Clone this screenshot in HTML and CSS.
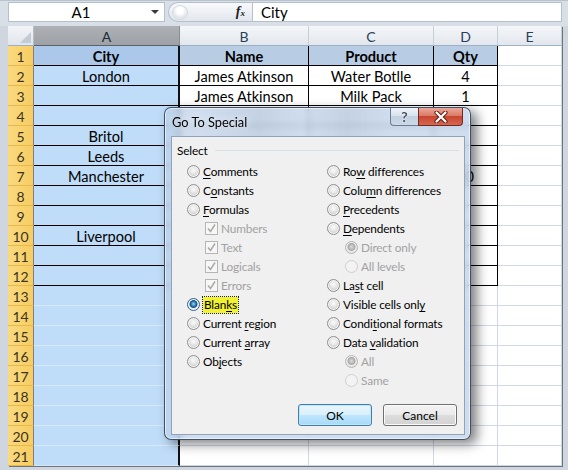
FILE: index.html
```html
<!DOCTYPE html>
<html>
<head>
<meta charset="utf-8">
<title>Go To Special</title>
<link rel="stylesheet" href="styles.css">
</head>
<body>
<div class="window">
  <div class="fbar">
    <div class="namebox"><span class="nb-text">A1</span><span class="nb-arrow"></span></div>
    <div class="fxpill"><span class="knob"></span><span class="fx">f<span class="fxs">x</span></span></div>
    <div class="finput">City</div>
  </div>
  <div class="sheet">
    <div class="corner"><span class="tri"></span></div><div class="ch sel">A</div><div class="ch">B</div><div class="ch">C</div><div class="ch">D</div><div class="ch">E</div>

    <div class="rh">1</div><div class="a t h">City</div><div class="t h">Name</div><div class="t h">Product</div><div class="t h">Qty</div><div></div>
    <div class="rh">2</div><div class="a t">London</div><div class="t">James Atkinson</div><div class="t">Water Botlle</div><div class="t">4</div><div></div>
    <div class="rh">3</div><div class="a t"></div><div class="t">James Atkinson</div><div class="t">Milk Pack</div><div class="t">1</div><div></div>
    <div class="rh">4</div><div class="a t"></div><div class="t"></div><div class="t"></div><div class="t"></div><div></div>
    <div class="rh">5</div><div class="a t">Britol</div><div class="t"></div><div class="t"></div><div class="t"></div><div></div>
    <div class="rh">6</div><div class="a t">Leeds</div><div class="t"></div><div class="t"></div><div class="t"></div><div></div>
    <div class="rh">7</div><div class="a t">Manchester</div><div class="t"></div><div class="t"></div><div class="t">10</div><div></div>
    <div class="rh">8</div><div class="a t"></div><div class="t"></div><div class="t"></div><div class="t"></div><div></div>
    <div class="rh">9</div><div class="a t"></div><div class="t"></div><div class="t"></div><div class="t"></div><div></div>
    <div class="rh">10</div><div class="a t">Liverpool</div><div class="t"></div><div class="t"></div><div class="t"></div><div></div>
    <div class="rh">11</div><div class="a t"></div><div class="t"></div><div class="t"></div><div class="t"></div><div></div>
    <div class="rh">12</div><div class="a t"></div><div class="t"></div><div class="t"></div><div class="t"></div><div></div>
    <div class="rh">13</div><div class="a x"></div><div></div><div></div><div></div><div></div>
    <div class="rh">14</div><div class="a x"></div><div></div><div></div><div></div><div></div>
    <div class="rh">15</div><div class="a x"></div><div></div><div></div><div></div><div></div>
    <div class="rh">16</div><div class="a x"></div><div></div><div></div><div></div><div></div>
    <div class="rh">17</div><div class="a x"></div><div></div><div></div><div></div><div></div>
    <div class="rh">18</div><div class="a x"></div><div></div><div></div><div></div><div></div>
    <div class="rh">19</div><div class="a x"></div><div></div><div></div><div></div><div></div>
    <div class="rh">20</div><div class="a x"></div><div></div><div></div><div></div><div></div>
    <div class="rh">21</div><div class="a x"></div><div></div><div></div><div></div><div></div>
  </div>
</div>

<div class="dialog">
  <div class="titlebar">
    <div class="title">Go To Special</div>
    <div class="tb-help">?</div>
    <div class="tb-close"><svg width="16" height="12" viewBox="0 0 16 12"><path d="M3.5 1.5 L12.5 10.5 M12.5 1.5 L3.5 10.5" stroke="#5b2219" stroke-width="4.2" stroke-linecap="round" fill="none"/><path d="M3.5 1.5 L12.5 10.5 M12.5 1.5 L3.5 10.5" stroke="#ffffff" stroke-width="2.2" stroke-linecap="round" fill="none"/></svg></div>
  </div>
  <div class="client">
    <div class="grp"><span>Select</span><span class="grp-line"></span></div>
    <div class="cols">
      <div class="col">
        <div class="item"><span class="rb"></span><span><u>C</u>omments</span></div>
        <div class="item"><span class="rb"></span><span>C<u>o</u>nstants</span></div>
        <div class="item"><span class="rb"></span><span><u>F</u>ormulas</span></div>
        <div class="item ind dis"><span class="cb"><svg width="11" height="11" viewBox="0 0 11 11"><path d="M2 5.5 L4.5 8.5 L9 1.5" stroke="#a9a9a9" stroke-width="1.5" fill="none"/></svg></span><span>Numbers</span></div>
        <div class="item ind dis"><span class="cb"><svg width="11" height="11" viewBox="0 0 11 11"><path d="M2 5.5 L4.5 8.5 L9 1.5" stroke="#a9a9a9" stroke-width="1.5" fill="none"/></svg></span><span>Text</span></div>
        <div class="item ind dis"><span class="cb"><svg width="11" height="11" viewBox="0 0 11 11"><path d="M2 5.5 L4.5 8.5 L9 1.5" stroke="#a9a9a9" stroke-width="1.5" fill="none"/></svg></span><span>Logicals</span></div>
        <div class="item ind dis"><span class="cb"><svg width="11" height="11" viewBox="0 0 11 11"><path d="M2 5.5 L4.5 8.5 L9 1.5" stroke="#a9a9a9" stroke-width="1.5" fill="none"/></svg></span><span>Errors</span></div>
        <div class="item"><span class="rb on"></span><span class="hl">Blan<u>k</u>s</span></div>
        <div class="item"><span class="rb"></span><span>Current <u>r</u>egion</span></div>
        <div class="item"><span class="rb"></span><span>Current <u>a</u>rray</span></div>
        <div class="item"><span class="rb"></span><span>Ob<u>j</u>ects</span></div>
      </div>
      <div class="col col2">
        <div class="item"><span class="rb"></span><span>Ro<u>w</u> differences</span></div>
        <div class="item"><span class="rb"></span><span>Colu<u>m</u>n differences</span></div>
        <div class="item"><span class="rb"></span><span><u>P</u>recedents</span></div>
        <div class="item"><span class="rb"></span><span><u>D</u>ependents</span></div>
        <div class="item ind dis"><span class="rb don"></span><span>Direct only</span></div>
        <div class="item ind dis"><span class="rb doff"></span><span>All levels</span></div>
        <div class="item"><span class="rb"></span><span>La<u>s</u>t cell</span></div>
        <div class="item"><span class="rb"></span><span>Visible cells onl<u>y</u></span></div>
        <div class="item"><span class="rb"></span><span>Condi<u>t</u>ional formats</span></div>
        <div class="item"><span class="rb"></span><span>Data <u>v</u>alidation</span></div>
        <div class="item ind dis"><span class="rb don"></span><span>All</span></div>
        <div class="item ind dis"><span class="rb doff"></span><span>Same</span></div>
      </div>
    </div>
    <div class="btns">
      <div class="btn def">OK</div>
      <div class="btn">Cancel</div>
    </div>
  </div>
</div>
</body>
</html>
```

FILE: styles.css
```css
* { box-sizing: border-box; }
html, body { margin: 0; padding: 0; }
body {
  width: 568px;
  height: 470px;
  overflow: hidden;
  position: relative;
  background: #cfd6df;
  font-family: Lato, "Liberation Sans", sans-serif;
  color: #000;
}

.window { padding: 0 6px 0 8px; }

/* formula bar */
.fbar {
  display: flex;
  height: 26px;
  padding: 1px 6px 4px 8px;
  margin: 0 -6px 0 -8px;
  background: #d9dfe7;
  border-top: 1px solid #b9c2cd;
}
.namebox {
  width: 157px;
  background: #fff;
  border: 1px solid #b5c0cd;
  display: flex;
  align-items: center;
  font-size: 15px;
}
.nb-text { flex: 1; text-align: center; padding-left: 2px; }
.nb-arrow {
  width: 0; height: 0;
  border-left: 4px solid transparent;
  border-right: 4px solid transparent;
  border-top: 4px solid #3a3a3a;
  margin-right: 5px;
}
.fxpill {
  width: 84px;
  margin-left: 3px;
  border: 1px solid #b5c0cd;
  border-right: none;
  border-radius: 11px 0 0 11px;
  background: linear-gradient(#f8f9fb, #e2e7ed);
  display: flex;
  align-items: center;
  justify-content: flex-end;
  padding-right: 7px;
  position: relative;
}
.knob {
  position: absolute;
  left: 4px; top: 3px;
  width: 14px; height: 13px;
  border-radius: 50%;
  background: radial-gradient(circle at 50% 35%, #ffffff 0 3px, #e3e7ec 7px);
  box-shadow: 0 0 0 1px #d3d9e0;
}
.fx {
  font-family: "Liberation Serif", serif;
  font-style: italic;
  font-weight: bold;
  font-size: 14px;
  color: #222;
}
.fxs { font-size: 9px; }
.finput {
  flex: 1;
  background: #fff;
  border: 1px solid #b5c0cd;
  font-size: 15px;
  padding-left: 8px;
  display: flex;
  align-items: center;
}

/* sheet */
.sheet {
  display: grid;
  grid-template-columns: 26px 146px 129px 125px 64px 64px;
  grid-auto-rows: 20px;
  background: #fff;
  font-size: 14.6px;
  box-shadow: 1px 1px 0 #6f747a;
}
.sheet > div {
  border-right: 1px solid #d0d7e5;
  border-bottom: 1px solid #d0d7e5;
  display: flex;
  align-items: center;
  justify-content: center;
  white-space: nowrap;
  overflow: hidden;
  padding-top: 1px;
}
.sheet > .corner {
  background: linear-gradient(#f2f4f7, #e1e6ec);
  border-right: 1px solid #b4bfcc;
  border-bottom: 1px solid #9eb0c4;
  position: relative;
}
.tri {
  position: absolute;
  right: 2px; bottom: 2px;
  width: 0; height: 0;
  border-left: 11px solid transparent;
  border-bottom: 11px solid #c3cbd4;
}
.sheet > .ch {
  background: linear-gradient(#f5f7f9, #e2e7ed);
  border-right: 1px solid #c6ced8;
  border-bottom: 1px solid #9eb0c4;
  color: #2a3f5c;
  font-size: 14px;
}
.sheet > .ch.sel {
  background: linear-gradient(#adb0b4, #9ea1a5);
  border-right: 1px solid #8a8d91;
  border-bottom: 1px solid #5d6166;
  color: #1d2a3a;
}
.sheet > .rh {
  background: linear-gradient(90deg, #fad97f, #f7cd62);
  border-right: 1px solid #7f7f7f;
  border-bottom: 1px solid #e6b84e;
  color: #3b3423;
  font-size: 14px;
}
.sheet > .t {
  border-right-color: #000;
  border-bottom-color: #000;
}
.sheet > .a {
  background: #bfdcf8;
  border-right: 2px solid #111;
}
.sheet > .a.x { border-bottom-color: #d6e9fb; }
.sheet > .h { background: #b8cce4; font-weight: bold; }
.sheet > .a.h { background: #abc8ea; }

/* dialog */
.dialog {
  position: absolute;
  left: 164px;
  top: 107px;
  width: 307px;
  height: 333px;
  border: 1px solid rgba(38, 56, 80, 0.85);
  border-radius: 7px;
  background: rgba(190, 209, 233, 0.74);
  backdrop-filter: blur(3px);
  box-shadow: 6px 4px 12px rgba(0, 0, 0, 0.5), inset 0 0 0 1px rgba(255, 255, 255, 0.55);
  padding: 0 5px 4px 6px;
  display: flex;
  flex-direction: column;
  font-family: Lato, "Liberation Sans", sans-serif;
  font-size: 11.8px;
  letter-spacing: -0.15px;
}
.titlebar {
  height: 28px;
  display: flex;
  align-items: flex-start;
  flex: none;
  background: linear-gradient(90deg, rgba(255,255,255,0) 10%, rgba(120,130,150,0.12) 30%, rgba(255,255,255,0) 45%, rgba(120,130,150,0.12) 60%, rgba(255,255,255,0) 75%);
}
.title {
  flex: 1;
  padding-left: 1px;
  line-height: 28px;
  font-size: 12.8px;
  letter-spacing: 0;
  color: #000;
  text-shadow: 0 0 6px rgba(255, 255, 255, 0.9);
}
.tb-help {
  width: 28px;
  height: 18px;
  border: 1px solid #6b7d93;
  border-top: none;
  border-right: none;
  border-radius: 0 0 0 4px;
  background: linear-gradient(#eef3f9 0%, #d9e3ee 45%, #c2d0e0 50%, #cbd9e8 100%);
  text-align: center;
  font-weight: bold;
  font-size: 14px;
  line-height: 17px;
  color: #46505e;
  text-shadow: 0 0 2px #fff, 0 0 1px #fff;
}
.tb-close {
  width: 45px;
  height: 18px;
  margin-right: 2px;
  border: 1px solid #6e2a22;
  border-top: none;
  border-radius: 0 0 4px 0;
  background: linear-gradient(#eaa899 0%, #dc7a66 45%, #c8452f 50%, #d6674f 100%);
  display: flex;
  align-items: center;
  justify-content: center;
}
.client {
  flex: 1;
  background: #f0f0f0;
  border: 1px solid #90a3ba;
  padding: 6px 7px 0 5px;
  display: flex;
  flex-direction: column;
}
.grp {
  display: flex;
  align-items: center;
  height: 14px;
}
.grp-line {
  flex: 1;
  height: 1px;
  background: #d5dfe5;
  margin-left: 7px;
  margin-right: -2px;
}
.cols {
  display: flex;
  margin-top: 5px;
  padding-left: 10px;
}
.col {
  display: flex;
  flex-direction: column;
  width: 140px;
  flex: none;
}
.col2 { flex: 1; width: auto; }
.item {
  height: 19px;
  display: flex;
  align-items: center;
  white-space: nowrap;
}
.item.ind { padding-left: 18px; }
.item.dis { color: #a2a2a2; }
.item u { text-decoration-thickness: 1px; text-underline-offset: 2px; }

.rb {
  flex: none;
  width: 13px;
  height: 13px;
  border-radius: 50%;
  margin-right: 3px;
  border: 1px solid #8e8f8f;
  background: radial-gradient(circle at 50% 40%, #fbfbfb 0, #e9e9e9 3px, #cdcdcd 6px);
  box-shadow: inset 0 0 0 1px #f7f7f7;
}
.rb.on {
  border-color: #2c628b;
  background: radial-gradient(circle at 50% 45%, #9ad6f7 0, #3a8bc4 2px, #134a78 3.5px, #e8eef3 4.5px, #cdd5dd 6px);
}
.rb.don {
  border-color: #b5b5b5;
  background: radial-gradient(circle at 50% 45%, #dedede 0, #a8a8a8 3.5px, #eeeeee 4.5px, #e2e2e2 6px);
  box-shadow: none;
}
.rb.doff {
  border-color: #cfcfcf;
  background: #f3f3f3;
  box-shadow: none;
}
.cb {
  flex: none;
  width: 13px;
  height: 13px;
  margin-right: 3px;
  border: 1px solid #b5b5b5;
  background: #f7f7f7;
  display: flex;
  align-items: center;
  justify-content: center;
}
.cb svg { display: block; }
.hl {
  background: #f3f230;
  outline: 1px dotted #222;
  outline-offset: 0;
  padding: 0 1px;
  line-height: 16px;
}

.btns {
  display: flex;
  justify-content: flex-end;
  gap: 11px;
  margin-top: 14px;
}
.btn {
  width: 74px;
  height: 22px;
  border: 1px solid #707070;
  border-radius: 3px;
  background: linear-gradient(#f3f3f3 0%, #ebebeb 48%, #dddddd 52%, #d2d2d2 100%);
  box-shadow: inset 0 0 0 1px #fbfbfb;
  display: flex;
  align-items: center;
  justify-content: center;
  font-size: 12px;
  letter-spacing: 0;
}
.btn.def {
  border-color: #3c7fb1;
  background: linear-gradient(#eaf6fd 0%, #d9f0fc 48%, #bee6fd 52%, #a7d9f5 100%);
  box-shadow: inset 0 0 0 1px #c4e5f6;
}
```
